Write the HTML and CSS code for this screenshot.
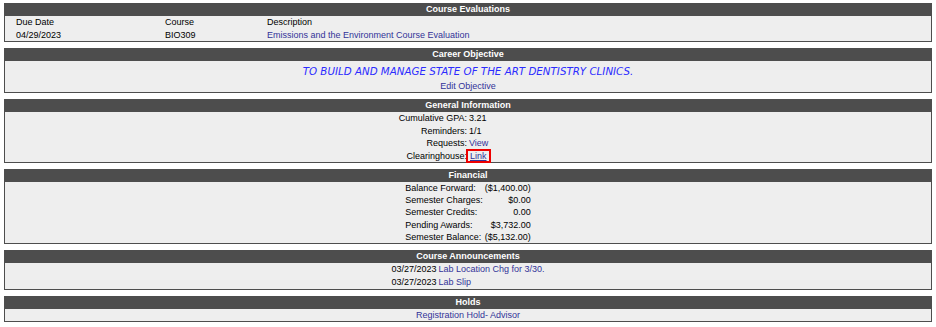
FILE: index.html
```html
<!DOCTYPE html>
<html lang="en">

<head>
	<meta charset="UTF-8">
	<title>Student Home</title>
	<link rel="stylesheet" href="styles.css">
</head>

<body>

	<div class="panel">
		<div class="panel-head">Course Evaluations</div>
		<div class="panel-body eval-grid">
			<div>Due Date</div>
			<div>Course</div>
			<div>Description</div>
			<div>04/29/2023</div>
			<div>BIO309</div>
			<div><a href="#">Emissions and the Environment Course Evaluation</a></div>
		</div>
	</div>

	<div class="panel">
		<div class="panel-head">Career Objective</div>
		<div class="panel-body center">
			<div class="objective">TO BUILD AND MANAGE STATE OF THE ART DENTISTRY CLINICS.</div>
			<div class="row"><a href="#">Edit Objective</a></div>
		</div>
	</div>

	<div class="panel">
		<div class="panel-head">General Information</div>
		<div class="panel-body info-grid">
			<div class="label">Cumulative GPA:</div>
			<div>3.21</div>
			<div class="label">Reminders:</div>
			<div>1/1</div>
			<div class="label">Requests:</div>
			<div><a href="#">View</a></div>
			<div class="label">Clearinghouse:</div>
			<div><a href="#" class="boxed">Link</a></div>
		</div>
	</div>

	<div class="panel">
		<div class="panel-head">Financial</div>
		<div class="panel-body center">
			<div class="money">
				<div>Balance Forward:</div><div class="amount">($1,400.00)</div>
				<div>Semester Charges:</div><div class="amount">$0.00</div>
				<div>Semester Credits:</div><div class="amount">0.00</div>
				<div>Pending Awards:</div><div class="amount">$3,732.00</div>
				<div>Semester Balance:</div><div class="amount">($5,132.00)</div>
			</div>
		</div>
	</div>

	<div class="panel">
		<div class="panel-head">Course Announcements</div>
		<div class="panel-body center pad">
			<div class="news">
				<div>03/27/2023</div><div><a href="#">Lab Location Chg for 3/30.</a></div>
				<div>03/27/2023</div><div><a href="#">Lab Slip</a></div>
			</div>
		</div>
	</div>

	<div class="panel">
		<div class="panel-head">Holds</div>
		<div class="panel-body center">
			<div class="row"><a href="#">Registration Hold- Advisor</a></div>
		</div>
	</div>

</body>

</html>
```

FILE: styles.css
```css
body {
	margin: 3px 4px;
	font-family: "Liberation Sans", Arial, sans-serif;
	font-size: 9px;
	color: #000;
	background-color: #fff;
}

a {
	color: #333399;
	text-decoration: none;
}

.panel {
	border: 1px solid #4d4d4d;
	border-top: none;
	margin-bottom: 6px;
	background-color: #eeeeee;
}

.panel-head {
	background-color: #4d4d4d;
	color: #fff;
	font-weight: bold;
	text-align: center;
	height: 13px;
	line-height: 13px;
}

.panel-body {
	line-height: 12.5px;
}

.pad {
	padding-bottom: 1px;
}

.center {
	text-align: center;
}

.eval-grid {
	display: grid;
	grid-template-columns: 149px 102px 1fr;
	padding-left: 11px;
}

.objective {
	font-family: "DejaVu Sans", Verdana, sans-serif;
	font-style: italic;
	font-size: 10.3px;
	color: #2b2bff;
	line-height: 17px;
	padding-top: 2px;
}

.row {
	line-height: 12px;
}

.info-grid {
	display: grid;
	grid-template-columns: 1fr 1fr;
	column-gap: 2px;
}

.info-grid .label {
	text-align: right;
}

.boxed {
	border: 2px solid #ee0000;
	margin-left: -3px;
	padding: 0 2px;
	text-decoration: underline;
}

.money {
	display: inline-grid;
	grid-template-columns: auto auto;
	column-gap: 2px;
	text-align: left;
	line-height: 12.2px;
}

.money .amount {
	text-align: right;
}

.news {
	display: inline-grid;
	grid-template-columns: auto auto;
	column-gap: 2px;
	text-align: left;
}
```
